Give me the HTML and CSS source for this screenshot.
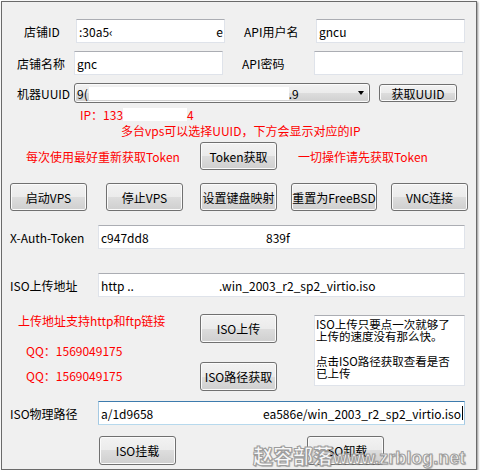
FILE: index.html
```html
<!DOCTYPE html>
<html lang="zh-CN">
<head>
<meta charset="utf-8">
<title>VPS 管理</title>
<link rel="stylesheet" href="styles.css">
</head>
<body>
<div class="win">
  <div class="row r1">
    <span class="lab lab-a">店铺ID</span>
    <div class="tb tb-s split"><span>:30a5‹</span><span>e</span></div>
    <span class="lab lab-b">API用户名</span>
    <div class="tb tb-s"><span>gncu</span></div>
  </div>
  <div class="row r2">
    <span class="lab lab-c">店铺名称</span>
    <div class="tb tb-s"><span>gnc</span></div>
    <span class="lab lab-b">API密码</span>
    <div class="tb tb-s"></div>
  </div>
  <div class="row r3">
    <span class="lab lab-c">机器UUID</span>
    <div class="combo">
      <span>9(</span><span class="redact redact-combo"></span><span>.9</span>
      <span class="arrow"></span>
    </div>
    <div class="btn btn-uuid">获取UUID</div>
  </div>
  <div class="line ip red"><span class="ip-pre">IP：133</span><span class="redact redact-ip"></span><span>4</span></div>
  <div class="line multi red">多台vps可以选择UUID，下方会显示对应的IP</div>
  <div class="row r-token">
    <span class="red note-l">每次使用最好重新获取Token</span>
    <div class="btn b77">Token获取</div>
    <span class="red note-r">一切操作请先获取Token</span>
  </div>
  <div class="row r-btns">
    <div class="btn b77">启动VPS</div>
    <div class="btn b77 g19">停止VPS</div>
    <div class="btn b77 g17">设置键盘映射</div>
    <div class="btn b85 g14">重置为FreeBSD</div>
    <div class="btn b77 g15">VNC连接</div>
  </div>
  <div class="row r-auth">
    <span class="lab lab-d">X-Auth-Token</span>
    <div class="tb tb-l"><span class="seg-auth">c947dd8</span><span>839f</span></div>
  </div>
  <div class="row r-url">
    <span class="lab lab-d">ISO上传地址</span>
    <div class="tb tb-l"><span class="seg-url">http ..</span><span>.win_2003_r2_sp2_virtio.iso</span></div>
  </div>
  <div class="upload">
    <div class="col-left">
      <div class="line red">上传地址支持http和ftp链接</div>
      <div class="line red qq qq1">QQ：1569049175</div>
      <div class="line red qq qq2">QQ：1569049175</div>
    </div>
    <div class="col-mid">
      <div class="btn b77 h29">ISO上传</div>
      <div class="btn b77 h29 btn-path">ISO路径获取</div>
    </div>
    <div class="memo">
      <div class="ml">ISO上传只要点一次就够了</div>
      <div class="ml">上传的速度没有那么快。</div>
      <div class="ml"></div>
      <div class="ml">点击ISO路径获取查看是否</div>
      <div class="ml">已上传</div>
    </div>
  </div>
  <div class="row r-path">
    <span class="lab lab-d">ISO物理路径</span>
    <div class="tb tb-l focus split"><span>a/1d9658</span><span class="tail">ea586e/win_2003_r2_sp2_virtio.iso<span class="caret"></span></span></div>
  </div>
  <div class="row r-bottom">
    <div class="btn b77 h29">ISO挂载</div>
    <div class="btn b77 h29 g131">ISO卸载</div>
  </div>
  <div class="watermark"><span class="wm-cn">赵容部落</span><span class="wm-en">www.zrblog.net</span></div>
</div>
</body>
</html>
```

FILE: styles.css
```css
* { box-sizing: border-box; }
html, body { margin: 0; background: #fff; }
body {
  font-family: "Noto Sans CJK SC", "Noto Sans", sans-serif;
  font-size: 12px;
  line-height: 13px;
  color: #000;
}
.win {
  position: relative;
  margin: 1px 0 0 1px;
  width: 476px;
  height: 469px;
  border: 1px solid #6a6a6a;
  background: #f0f0f0;
  box-shadow: 1px 1px 2px rgba(0, 0, 0, 0.45);
  padding-top: 17px;
}
.row { display: flex; align-items: center; }
.lab { white-space: nowrap; }
.red { color: #ff0000; }

.tb {
  height: 24px;
  background: #fff;
  border: 1px solid #dfe3ea;
  border-top-color: #abadb3;
  display: flex;
  align-items: center;
  padding: 0 1px 0 2px;
  white-space: nowrap;
  overflow: hidden;
}
.tb.split { justify-content: space-between; }
.tb-s { width: 149px; }
.tb-l { width: 367px; }
.tb.focus {
  border-color: #a4c9e3 #a4c9e3 #b7d9ed;
  border-top-color: #3d7bad;
}

.btn {
  height: 28px;
  border: 1px solid #707070;
  border-radius: 3px;
  background: linear-gradient(#f2f2f2, #ebebeb 50%, #dddddd 50%, #cfcfcf);
  box-shadow: inset 0 0 0 1px #fbfbfb;
  display: flex;
  align-items: center;
  justify-content: center;
  white-space: nowrap;
  flex: none;
}
.b77 { width: 77px; }
.b85 { width: 86px; }
.h29 { height: 29px; }
.g19 { margin-left: 19px; }
.g17 { margin-left: 17px; }
.g14 { margin-left: 14px; }
.g15 { margin-left: 14px; }
.g131 { margin-left: 131px; }

/* row 1-3 */
.r1 { height: 24px; padding-left: 22px; }
.r2 { height: 24px; margin-top: 8px; padding-left: 15px; }
.lab-a { width: 52px; }
.lab-c { width: 57px; }
.lab-b { width: 72px; margin-left: 19px; }
.r3 { height: 20px; margin-top: 8px; padding-left: 15px; }
.combo {
  width: 296px;
  height: 20px;
  border: 1px solid #707070;
  border-radius: 3px;
  background: linear-gradient(#f2f2f2, #ebebeb 50%, #dddddd 50%, #cfcfcf);
  box-shadow: inset 0 0 0 1px #fbfbfb;
  display: flex;
  align-items: center;
  padding-left: 2px;
  white-space: nowrap;
}
.redact { display: inline-block; background: #fff; }
.redact-combo { width: 200px; height: 13px; margin-left: 1px; }
.arrow {
  margin-left: auto;
  margin-right: 5px;
  width: 0;
  height: 0;
  border-left: 3.5px solid transparent;
  border-right: 3.5px solid transparent;
  border-top: 4px solid #000;
}
.btn-uuid { width: 78px; height: 18px; margin-left: 9px; }

/* red lines */
.line { height: 13px; white-space: nowrap; display: flex; align-items: center; }
.ip { margin-top: 5px; padding-left: 78px; }
.ip-pre { width: 43px; }
.redact-ip { width: 64px; height: 13px; }
.multi { margin-top: 3px; padding-left: 119px; }

.r-token { height: 28px; margin-top: 5px; padding-left: 24px; }
.note-l { width: 174px; white-space: nowrap; }
.note-r { margin-left: 21px; white-space: nowrap; }

.r-btns { height: 28px; margin-top: 13px; padding-left: 8px; }

.r-auth { height: 24px; margin-top: 14px; padding-left: 8px; }
.r-url { height: 24px; margin-top: 24px; padding-left: 8px; }
.lab-d { width: 88px; }
.seg-auth { width: 165px; flex: none; }
.seg-url { width: 118px; flex: none; }

/* upload section */
.upload { display: flex; align-items: flex-start; margin-top: 17px; padding-left: 16px; height: 77px; }
.col-left { width: 182px; }
.qq { padding-left: 8px; }
.qq1 { margin-top: 17px; }
.qq2 { margin-top: 12px; }
.col-mid { width: 77px; }
.btn-path { margin-top: 19px; }
.memo {
  margin-left: 37px;
  margin-top: 1px;
  width: 151px;
  height: 71px;
  background: #fff;
  border: 1px solid #dfe3ea;
  border-top-color: #abadb3;
  padding: 2px 1px;
  overflow: hidden;
}
.ml {
  height: 12.3px;
  font-size: 11.5px;
  line-height: 12.3px;
  white-space: nowrap;
}

.r-path { height: 24px; margin-top: 10px; padding-left: 8px; }
.tail { display: flex; align-items: center; }
.caret { display: inline-block; width: 1px; height: 14px; background: #000; margin-left: 1px; }

.r-bottom { height: 29px; margin-top: 11px; padding-left: 97px; }

.watermark {
  position: absolute;
  left: 251px;
  top: 442px;
  white-space: nowrap;
  color: #f7f7f7;
  -webkit-text-stroke: 1px #9c9c9c;
  text-shadow: 1px 1px 1px rgba(0, 0, 0, 0.25);
  display: flex;
  align-items: baseline;
  line-height: 24px;
}
.wm-cn { font-size: 20px; font-weight: 900; }
.wm-en { font-family: "Liberation Sans", sans-serif; font-size: 18px; font-weight: bold; }
```
